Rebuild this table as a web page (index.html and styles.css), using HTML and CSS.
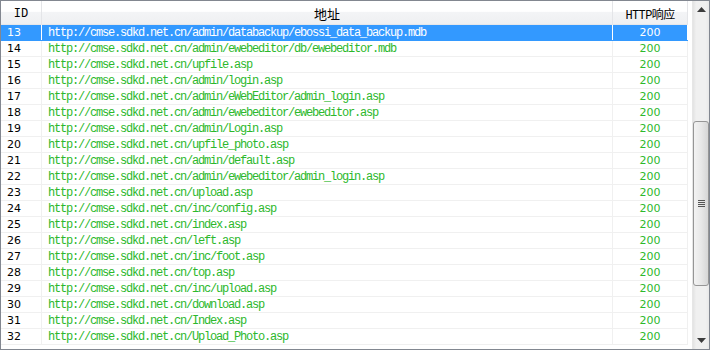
FILE: index.html
```html
<!DOCTYPE html>
<html lang="zh-CN">
<head>
    <meta charset="UTF-8">
    <title>扫描结果</title>
    <link rel="stylesheet" href="styles.css">
</head>
<body>
    <div class="list-view">
        <div class="grid">
            <div class="head">
                <div class="col col-id">ID</div>
                <div class="col col-url">地址</div>
                <div class="col col-code">HTTP响应</div>
            </div>
            <div class="row selected"><div class="cell id">13</div><div class="cell url">http://cmse.sdkd.net.cn/admin/databackup/ebossi_data_backup.mdb</div><div class="cell code">200</div></div>
            <div class="row"><div class="cell id">14</div><div class="cell url">http://cmse.sdkd.net.cn/admin/ewebeditor/db/ewebeditor.mdb</div><div class="cell code">200</div></div>
            <div class="row"><div class="cell id">15</div><div class="cell url">http://cmse.sdkd.net.cn/upfile.asp</div><div class="cell code">200</div></div>
            <div class="row"><div class="cell id">16</div><div class="cell url">http://cmse.sdkd.net.cn/admin/login.asp</div><div class="cell code">200</div></div>
            <div class="row"><div class="cell id">17</div><div class="cell url">http://cmse.sdkd.net.cn/admin/eWebEditor/admin_login.asp</div><div class="cell code">200</div></div>
            <div class="row"><div class="cell id">18</div><div class="cell url">http://cmse.sdkd.net.cn/admin/ewebeditor/ewebeditor.asp</div><div class="cell code">200</div></div>
            <div class="row"><div class="cell id">19</div><div class="cell url">http://cmse.sdkd.net.cn/admin/Login.asp</div><div class="cell code">200</div></div>
            <div class="row"><div class="cell id">20</div><div class="cell url">http://cmse.sdkd.net.cn/upfile_photo.asp</div><div class="cell code">200</div></div>
            <div class="row"><div class="cell id">21</div><div class="cell url">http://cmse.sdkd.net.cn/admin/default.asp</div><div class="cell code">200</div></div>
            <div class="row"><div class="cell id">22</div><div class="cell url">http://cmse.sdkd.net.cn/admin/ewebeditor/admin_login.asp</div><div class="cell code">200</div></div>
            <div class="row"><div class="cell id">23</div><div class="cell url">http://cmse.sdkd.net.cn/upload.asp</div><div class="cell code">200</div></div>
            <div class="row"><div class="cell id">24</div><div class="cell url">http://cmse.sdkd.net.cn/inc/config.asp</div><div class="cell code">200</div></div>
            <div class="row"><div class="cell id">25</div><div class="cell url">http://cmse.sdkd.net.cn/index.asp</div><div class="cell code">200</div></div>
            <div class="row"><div class="cell id">26</div><div class="cell url">http://cmse.sdkd.net.cn/left.asp</div><div class="cell code">200</div></div>
            <div class="row"><div class="cell id">27</div><div class="cell url">http://cmse.sdkd.net.cn/inc/foot.asp</div><div class="cell code">200</div></div>
            <div class="row"><div class="cell id">28</div><div class="cell url">http://cmse.sdkd.net.cn/top.asp</div><div class="cell code">200</div></div>
            <div class="row"><div class="cell id">29</div><div class="cell url">http://cmse.sdkd.net.cn/inc/upload.asp</div><div class="cell code">200</div></div>
            <div class="row"><div class="cell id">30</div><div class="cell url">http://cmse.sdkd.net.cn/download.asp</div><div class="cell code">200</div></div>
            <div class="row"><div class="cell id">31</div><div class="cell url">http://cmse.sdkd.net.cn/Index.asp</div><div class="cell code">200</div></div>
            <div class="row"><div class="cell id">32</div><div class="cell url">http://cmse.sdkd.net.cn/Upload_Photo.asp</div><div class="cell code">200</div></div>
        </div>

        <div class="scrollbar">
            <div class="arrow">
                <svg width="9" height="5" viewBox="0 0 9 5"><path d="M4.5 0 L9 5 L0 5 Z" fill="#3c3c3c"/></svg>
            </div>
            <div class="track">
                <div class="thumb">
                    <div class="grip"><span></span><span></span><span></span><span></span></div>
                </div>
            </div>
            <div class="arrow">
                <svg width="9" height="5" viewBox="0 0 9 5"><path d="M0 0 L9 0 L4.5 5 Z" fill="#3c3c3c"/></svg>
            </div>
        </div>
    </div>
</body>
</html>
```

FILE: styles.css
```css
* {
    margin: 0;
    padding: 0;
    box-sizing: border-box;
}

body {
    background: #fff;
}

.list-view {
    width: 710px;
    height: 350px;
    border: 1px solid #828790;
    background: #fff;
    display: flex;
    overflow: hidden;
}

.grid {
    width: 687px;
    display: flex;
    flex-direction: column;
}

.head {
    display: flex;
    height: 24px;
    background: linear-gradient(#ffffff 0, #ffffff 45%, #f3f4f6 50%, #eff0f2 100%);
    border-bottom: 1px solid #e6e7ea;
    font-family: "Liberation Mono", "Noto Sans CJK SC", monospace;
    font-size: 12px;
    color: #000;
}

.head .col {
    display: flex;
    align-items: center;
    justify-content: center;
    border-right: 1px solid #e4e5e8;
    padding-top: 2px;
}

.col-id { width: 41px; }
.col-url { width: 571px; font-family: "Noto Sans CJK SC", sans-serif; font-size: 13px; }
.col-code { width: 75px; letter-spacing: -0.6px; }

.row {
    display: flex;
    height: 16px;
    border-bottom: 1px solid #f0f0f0;
    color: #000;
}

.cell {
    border-right: 1px solid #f0f0f0;
    display: flex;
    align-items: center;
    white-space: nowrap;
    overflow: hidden;
}

.cell.id {
    width: 41px;
    padding-left: 6px;
    font-family: "DejaVu Sans", sans-serif;
    font-size: 11px;
}

.cell.url {
    width: 571px;
    padding-left: 6px;
    font-family: "Liberation Mono", monospace;
    font-size: 12px;
    letter-spacing: -1.2px;
    color: #2cb82c;
}

.cell.code {
    width: 75px;
    justify-content: center;
    font-family: "DejaVu Sans", sans-serif;
    font-size: 11px;
    color: #2cb82c;
}

.row.selected {
    background: #3399ff;
    border-bottom-color: #3399ff;
}

.row.selected .cell {
    color: #fff;
    border-right-color: #ffffff;
}

.scrollbar {
    width: 17px;
    margin-left: 4px;
    display: flex;
    flex-direction: column;
    background: linear-gradient(90deg, #e3e3e3 0, #f0f0f0 20%, #f0f0f0 80%, #e8e8e8 100%);
    border-left: 1px solid #e6e6e6;
}

.arrow {
    height: 17px;
    display: flex;
    align-items: center;
    justify-content: center;
    flex-shrink: 0;
}

.track {
    flex: 1;
    padding-top: 103px;
    padding-bottom: 46px;
    display: flex;
    justify-content: center;
}

.thumb {
    width: 15px;
    flex: 1;
    border: 1px solid #969696;
    border-radius: 3px;
    background: linear-gradient(90deg, #f3f3f3 0, #e8e8e8 50%, #d6d6d6 100%);
    display: flex;
    align-items: center;
    justify-content: center;
}

.grip {
    display: flex;
    flex-direction: column;
    gap: 1px;
}

.grip span {
    display: block;
    width: 7px;
    height: 1px;
    background: #555;
}
```
